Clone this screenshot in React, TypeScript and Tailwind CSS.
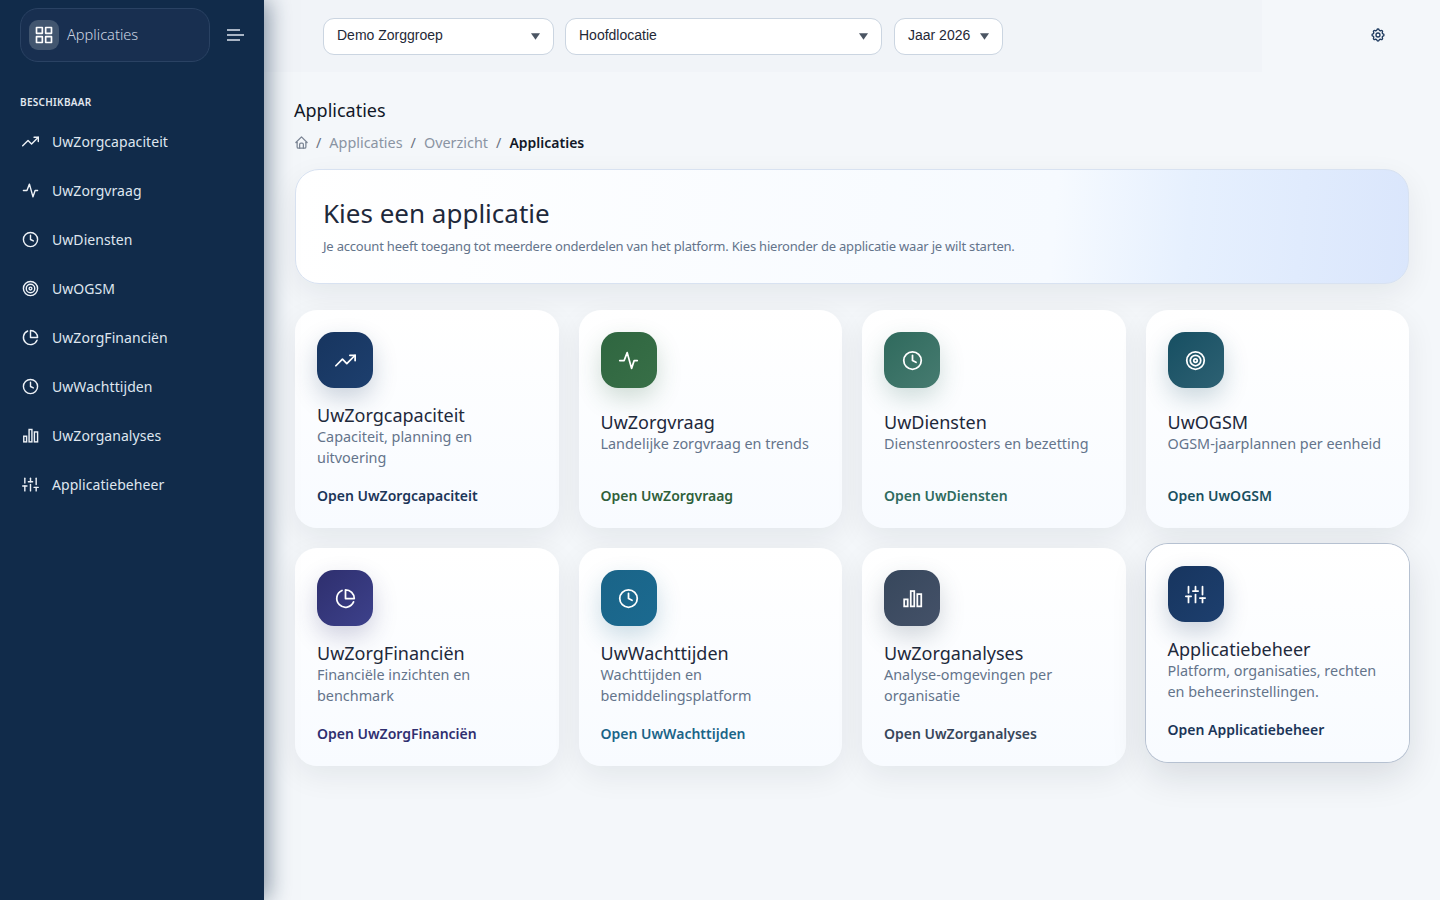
import React from "react";
import { TbHome, TbSettings } from "react-icons/tb";
import { FiTrendingUp, FiClock, FiTarget, FiPieChart, FiSliders, FiGrid } from "react-icons/fi";

type IconT = React.ComponentType<{ size?: number; className?: string }>;

function Pulse({ size = 18, className = "" }: { size?: number; className?: string }) {
  return (
    <svg width={size} height={size} viewBox="0 0 24 24" fill="none" stroke="currentColor" strokeWidth={2} strokeLinecap="round" strokeLinejoin="round" className={className}>
      <path d="M2 12h5l3.5-9l5 18l3-9h3.5" />
    </svg>
  );
}

function Bars({ size = 18, className = "" }: { size?: number; className?: string }) {
  return (
    <svg width={size} height={size} viewBox="0 0 24 24" fill="none" stroke="currentColor" strokeWidth={2} className={className}>
      <rect x="2.5" y="13" width="4" height="8" />
      <rect x="10" y="3.5" width="4" height="17.5" />
      <rect x="17.5" y="7" width="4.5" height="14" />
    </svg>
  );
}

const nav: { label: string; icon: IconT }[] = [
  { label: "UwZorgcapaciteit", icon: FiTrendingUp },
  { label: "UwZorgvraag", icon: Pulse },
  { label: "UwDiensten", icon: FiClock },
  { label: "UwOGSM", icon: FiTarget },
  { label: "UwZorgFinanciën", icon: FiPieChart },
  { label: "UwWachttijden", icon: FiClock },
  { label: "UwZorganalyses", icon: Bars },
  { label: "Applicatiebeheer", icon: FiSliders },
];

const cards: { title: string; desc: string; icon: IconT; grad: string; glow: string; link: string; active?: boolean }[] = [
  { title: "UwZorgcapaciteit", desc: "Capaciteit, planning en uitvoering", icon: FiTrendingUp, grad: "from-[#17355f] to-[#1d3f6e]", glow: "shadow-[0_10px_24px_rgba(23,53,95,0.22)]", link: "text-[#1b3558]" },
  { title: "UwZorgvraag", desc: "Landelijke zorgvraag en trends", icon: Pulse, grad: "from-[#2f6640] to-[#386f47]", glow: "shadow-[0_10px_24px_rgba(47,102,64,0.22)]", link: "text-[#2f5f3a]" },
  { title: "UwDiensten", desc: "Dienstenroosters en bezetting", icon: FiClock, grad: "from-[#2f6a5d] to-[#467b70]", glow: "shadow-[0_10px_24px_rgba(47,106,93,0.22)]", link: "text-[#2f6b5e]" },
  { title: "UwOGSM", desc: "OGSM-jaarplannen per eenheid", icon: FiTarget, grad: "from-[#164f62] to-[#2d6173]", glow: "shadow-[0_10px_24px_rgba(22,79,98,0.22)]", link: "text-[#1a4f60]" },
  { title: "UwZorgFinanciën", desc: "Financiële inzichten en benchmark", icon: FiPieChart, grad: "from-[#2e2f6e] to-[#3d418b]", glow: "shadow-[0_10px_24px_rgba(46,47,110,0.22)]", link: "text-[#2f2f70]" },
  { title: "UwWachttijden", desc: "Wachttijden en bemiddelingsplatform", icon: FiClock, grad: "from-[#1a6488] to-[#1b6a90]", glow: "shadow-[0_10px_24px_rgba(26,100,136,0.22)]", link: "text-[#1a6488]" },
  { title: "UwZorganalyses", desc: "Analyse-omgevingen per organisatie", icon: Bars, grad: "from-[#37475c] to-[#445168]", glow: "shadow-[0_10px_24px_rgba(55,71,92,0.22)]", link: "text-[#37465a]" },
  { title: "Applicatiebeheer", desc: "Platform, organisaties, rechten en beheerinstellingen.", icon: FiSliders, grad: "from-[#17355f] to-[#1d3f6e]", glow: "shadow-[0_10px_24px_rgba(23,53,95,0.22)]", link: "text-[#1b3558]", active: true },
];

function Select({ label, width, extra = "" }: { label: string; width: string; extra?: string }) {
  return (
    <div className={`${width} ${extra} h-[37px] flex items-center justify-between px-[13px] bg-white border border-[#cbd5e1] rounded-[11px] font-['Liberation_Sans',sans-serif] text-[14px] text-[#1f2937]`}>
      <span className="pb-[2px]">{label}</span>
      <svg width="9" height="7" viewBox="0 0 10 7" className="text-[#4b5563]">
        <path d="M0 0h10L5 7z" fill="currentColor" />
      </svg>
    </div>
  );
}

export default function App() {
  return (
    <div className="flex h-[900px] overflow-hidden bg-[#f4f7fa] font-['Noto_Sans','Open_Sans',sans-serif]">
      <aside className="relative z-10 w-[264px] shrink-0 bg-[#112b4a] shadow-[4px_0_22px_rgba(17,43,74,0.5)]">
        <div className="flex items-center pl-[20px] pt-[8px]">
          <div className="w-[190px] h-[54px] flex items-center pl-[8px] gap-[8px] rounded-[18px] bg-[#182f50] border border-[#2a4263]">
            <div className="w-[30px] h-[30px] rounded-[9px] bg-[#42566f] flex items-center justify-center text-white">
              <FiGrid size={20} />
            </div>
            <span className="text-[14.6px] font-light text-[#ccd5e1]">Applicaties</span>
          </div>
          <svg width="17" height="12" viewBox="0 0 17 12" className="ml-[17px] text-[#dbe3ee]" fill="none" stroke="currentColor" strokeWidth="1.7">
            <path d="M0 1h13M0 6h17M0 11h13" />
          </svg>
        </div>
        <div className="pl-[20px] mt-[33px] mb-[8px] h-[14px] flex items-center text-[10px] font-semibold tracking-[0.3px] text-[#e2e8f0] leading-none">BESCHIKBAAR</div>
        <nav className="flex flex-col">
          {nav.map((n) => {
            const I = n.icon;
            return (
              <div key={n.label} className="h-[49px] flex items-center pl-[22px] gap-[13px] text-[14px] tracking-[0.06px] text-[#dfe6ef]">
                <I size={17} className="text-[#eef2f7]" />
                <span>{n.label}</span>
              </div>
            );
          })}
        </nav>
      </aside>

      <main className="flex-1 min-w-0">
        <header className="flex h-[72px]">
          <div className="w-[998px] bg-[#f1f4f8] pl-[59px] pt-[1px] flex items-center gap-[11px]">
            <Select label="Demo Zorggroep" width="w-[231px]" />
            <Select label="Hoofdlocatie" width="w-[317px]" />
            <Select label="Jaar 2026" width="w-[109px]" extra="ml-px" />
          </div>
          <div className="flex-1 flex items-center justify-end pr-[54px] pb-[3px]">
            <TbSettings size={16} className="text-[#1e3a5f]" />
          </div>
        </header>

        <div className="pl-[30px] pr-[31px]">
          <h1 className="mt-[25px] text-[18px] leading-[26px] font-normal text-[#111827]">Applicaties</h1>
          <div className="mt-[10px] flex items-center h-[20px] text-[14.4px] text-[#8a94a3]">
            <TbHome size={15} className="text-[#7b8594] -mt-[1px]" />
            <div className="flex items-baseline">
              <span className="ml-[7px] mr-[8px] text-[#6b7280]">/</span>
              <span>Applicaties</span>
              <span className="mx-[8px] text-[#6b7280]">/</span>
              <span>Overzicht</span>
              <span className="mx-[8px] text-[#6b7280]">/</span>
              <span className="text-[14px] font-semibold text-[#111827]">Applicaties</span>
            </div>
          </div>

          <section className="mt-[16px] ml-px h-[115px] rounded-[24px] border border-[#d8e2f1] bg-[linear-gradient(95deg,#ffffff_0%,#f6faff_68%,#e6f0fe_80%,#dae6fc_100%)] shadow-[0_10px_30px_rgba(15,23,42,0.07)] pl-[27px] pb-[2px] flex flex-col justify-center">
            <h2 className="text-[26px] leading-[34px] font-normal text-[#1e293b]">Kies een applicatie</h2>
            <p className="mt-[6px] text-[13px] leading-[20px] tracking-[-0.2px] text-[#64748b]">
              Je account heeft toegang tot meerdere onderdelen van het platform. Kies hieronder de applicatie waar je wilt starten.
            </p>
          </section>

          <div className="mt-[26px] ml-px grid grid-cols-4 gap-[20px]">
            {cards.map((c) => {
              const I = c.icon;
              return (
                <div
                  key={c.title}
                  className={`h-[218px] rounded-[22px] bg-gradient-to-b from-white to-[#f8fbff] p-[22px] flex flex-col ${
                    c.active
                      ? "-translate-y-1 ring-1 ring-[#b6c1d1] shadow-[0_14px_36px_rgba(15,23,42,0.12)]"
                      : "shadow-[0_10px_30px_rgba(15,23,42,0.07)]"
                  }`}
                >
                  <div className={`w-[56px] h-[56px] shrink-0 rounded-[17px] bg-gradient-to-br ${c.grad} ${c.glow} flex items-center justify-center text-white`}>
                    <I size={21} />
                  </div>
                  <div className="grow basis-[11px]" />
                  <div className="pb-[1px]">
                    <h3 className="text-[18px] leading-[25px] -mb-[2px] font-normal text-[#1e293b]">{c.title}</h3>
                    <p className="text-[14.4px] leading-[21px] text-[#64748b]">{c.desc}</p>
                  </div>
                  <div className="grow-[2] basis-[9px]" />
                  <div className={`text-[14px] leading-[20px] font-semibold ${c.link}`}>Open {c.title}</div>
                </div>
              );
            })}
          </div>
        </div>
      </main>
    </div>
  );
}
